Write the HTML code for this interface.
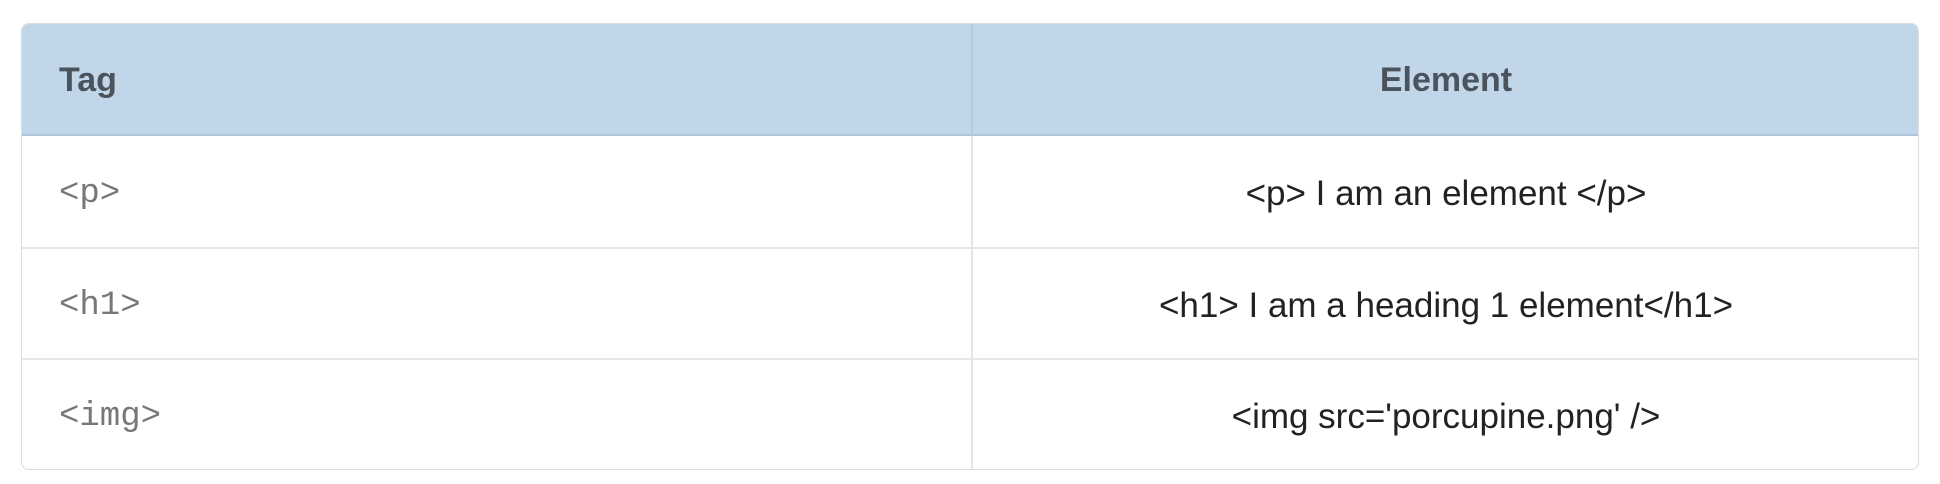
<!DOCTYPE html>
<html><head><meta charset="utf-8"><style>
html,body{margin:0;padding:0;background:#fff;width:1940px;height:484px;overflow:hidden}
.t{position:absolute;left:21px;top:23px;width:1898px;height:447px;border:1px solid #dcdcdc;border-radius:8px;overflow:hidden;box-sizing:border-box}
.h{position:absolute;left:0;top:0;width:100%;height:112px;background:#c1d6e9;border-bottom:2px solid #aec5db;box-sizing:border-box}
.v{position:absolute;left:949px;top:0;width:2px;height:100%;background:#e6e6e6}
.vh{position:absolute;left:949px;top:0;width:2px;height:112px;background:#b3c9de}
.r{position:absolute;left:0;width:100%;height:2px;background:#e6e6e6}
.c{position:absolute;font-family:"Liberation Sans",Arial,sans-serif;line-height:40px}
.b{font-weight:bold;color:#4b545c;font-size:34px}
.m{font-family:"Liberation Mono",monospace;color:#777;font-size:34px;left:37px}
.e{font-size:35px;color:#222;left:951px;width:946px;text-align:center}
</style></head><body>
<div class="t">
<div class="h"></div>
<div class="v"></div><div class="vh"></div>
<div class="r" style="top:223px"></div>
<div class="r" style="top:334px"></div>
<div class="c b" style="left:37px;top:36px">Tag</div>
<div class="c b" style="left:951px;width:946px;text-align:center;top:36px">Element</div>
<div class="c m" style="top:150px">&lt;p&gt;</div>
<div class="c m" style="top:262px">&lt;h1&gt;</div>
<div class="c m" style="top:373px">&lt;img&gt;</div>
<div class="c e" style="top:150px">&lt;p&gt; I am an element &lt;/p&gt;</div>
<div class="c e" style="top:262px">&lt;h1&gt; I am a heading 1 element&lt;/h1&gt;</div>
<div class="c e" style="top:373px">&lt;img src='porcupine.png' /&gt;</div>
</div>
</body></html>
